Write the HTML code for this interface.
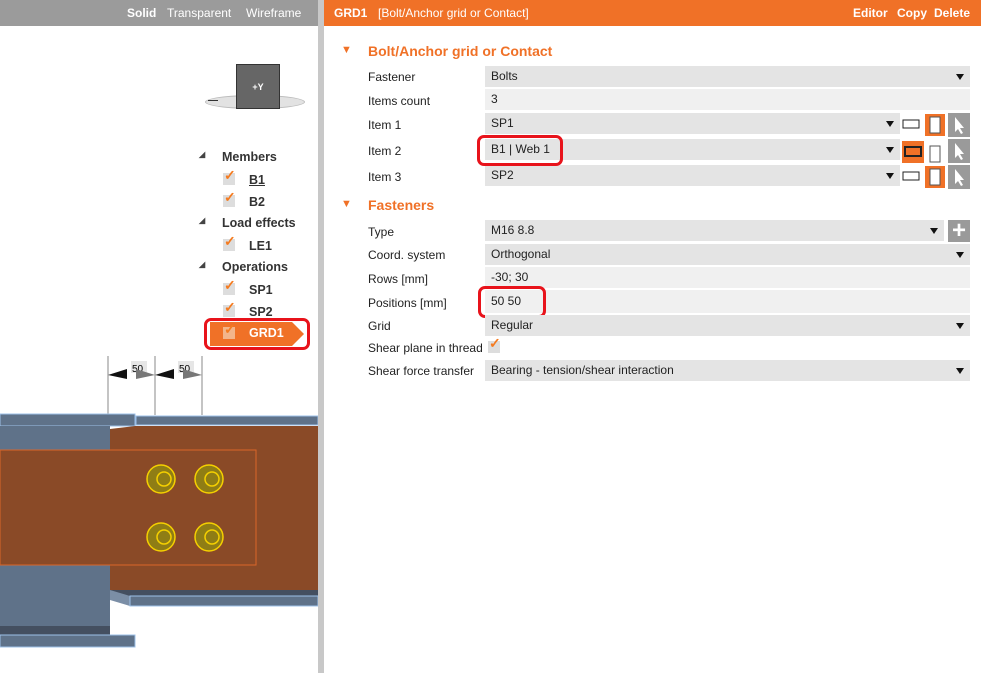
<!DOCTYPE html>
<html><head><style>
*{margin:0;padding:0;box-sizing:border-box}
body{width:981px;height:673px;overflow:hidden;background:#fff;font-family:"Liberation Sans",sans-serif;font-size:12px;color:#222;position:relative}
.a{position:absolute;white-space:nowrap}
.topL{left:0;top:0;width:318px;height:26px;background:#9b9b9b;color:#fff;font-size:12px}
.topR{left:324px;top:0;width:657px;height:26px;background:#f07127;color:#fff;font-size:12px}
.lbl{position:absolute;left:368px;font-size:12px;white-space:nowrap}
.fld{position:absolute;left:485px;background:#e4e4e4;padding-left:6px;font-size:12px;line-height:21px;height:21px}
.dd::after{content:"";position:absolute;right:6px;top:8px;border-left:4px solid transparent;border-right:4px solid transparent;border-top:6px solid #111}
.tree{font-size:12.5px;font-weight:bold;color:#333}
.chk{position:absolute;width:12px;height:12px;background:#ddd}
.chk::after{content:"✓";position:absolute;left:1px;top:-6px;color:#f47b20;font-size:14px;font-weight:bold}
.red{position:absolute;border:3px solid #e8131b;border-radius:7px}
</style></head><body>
<div class="a topL"><span class="a" style="left:127px;top:6px;font-weight:bold">Solid</span><span class="a" style="left:167px;top:6px">Transparent</span><span class="a" style="left:246px;top:6px">Wireframe</span></div>
<div class="a" style="left:318px;top:0;width:6px;height:673px;background:#c8c8c8"></div>
<div class="a topR"><span class="a" style="left:10px;top:6px;font-weight:bold">GRD1</span><span class="a" style="left:54px;top:6px">[Bolt/Anchor grid or Contact]</span>
<span class="a" style="left:529px;top:6px;font-weight:bold">Editor</span><span class="a" style="left:573px;top:6px;font-weight:bold">Copy</span><span class="a" style="left:610px;top:6px;font-weight:bold">Delete</span></div>

<!-- view cube -->
<div class="a" style="left:205px;top:95px;width:100px;height:14px;border-radius:50%;background:#e2e2e2;border:1px solid #bbb"></div>
<div class="a" style="left:236px;top:64px;width:44px;height:45px;background:#666;border:1px solid #333;color:#fff;font-size:9px;font-weight:bold;text-align:center;line-height:45px">+Y</div>
<div class="a" style="left:208px;top:100px;width:10px;height:1px;background:#333"></div>

<!-- tree -->
<div class="a tree">
<span class="a" style="left:199px;top:150px;font-size:8px;color:#444">◢</span><span class="a" style="left:222px;top:150px">Members</span>
<div class="chk" style="left:223px;top:173px"></div><span class="a" style="left:249px;top:173px;text-decoration:underline">B1</span>
<div class="chk" style="left:223px;top:195px"></div><span class="a" style="left:249px;top:195px">B2</span>
<span class="a" style="left:199px;top:216px;font-size:8px;color:#444">◢</span><span class="a" style="left:222px;top:216px">Load effects</span>
<div class="chk" style="left:223px;top:239px"></div><span class="a" style="left:249px;top:239px">LE1</span>
<span class="a" style="left:199px;top:260px;font-size:8px;color:#444">◢</span><span class="a" style="left:222px;top:260px">Operations</span>
<div class="chk" style="left:223px;top:283px"></div><span class="a" style="left:249px;top:283px">SP1</span>
<div class="chk" style="left:223px;top:305px"></div><span class="a" style="left:249px;top:305px">SP2</span>
</div>
<svg class="a" style="left:210px;top:322px" width="96" height="24"><polygon points="0,0 82,0 94,12 82,24 0,24" fill="#f07127"/></svg>
<div class="chk" style="left:223px;top:327px;background:#f3b48a"></div><span class="a tree" style="left:249px;top:326px;color:#fff">GRD1</span>
<div class="red" style="left:204px;top:318px;width:106px;height:32px"></div>

<!-- drawing -->
<svg class="a" style="left:0;top:350px" width="318" height="323">
<line x1="108" y1="6" x2="108" y2="65" stroke="#888"/><line x1="155" y1="6" x2="155" y2="65" stroke="#888"/><line x1="202" y1="6" x2="202" y2="65" stroke="#888"/>
<rect x="131" y="11" width="16" height="12" fill="#e6e6e6"/><rect x="178" y="11" width="16" height="12" fill="#e6e6e6"/>
<text x="132" y="22" font-size="10" font-family="Liberation Sans">50</text><text x="179" y="22" font-size="10" font-family="Liberation Sans">50</text>
<polygon points="108,25 127,19 127,29" fill="#111"/><polygon points="155,25 136,19 136,29" fill="#777"/>
<polygon points="155,25 174,19 174,29" fill="#111"/><polygon points="202,25 183,19 183,29" fill="#777"/>
<rect x="0" y="64" width="135" height="12" fill="#5f7289" stroke="#9cc0e8"/>
<rect x="136" y="66" width="182" height="9" fill="#5f7289" stroke="#9cc0e8"/>
<rect x="0" y="76" width="110" height="200" fill="#5f7289"/>
<polygon points="110,79 135,76 318,76 318,240 110,240" fill="#8a4a27"/>
<rect x="110" y="240" width="208" height="6" fill="#444f60"/>
<polygon points="110,240 130,246 130,256 110,250" fill="#7b8ea6"/>
<rect x="130" y="246" width="188" height="10" fill="#5f7289" stroke="#9cc0e8"/>
<rect x="0" y="100" width="256" height="115" fill="#8a4a27" stroke="#d9652a"/>
<rect x="0" y="276" width="110" height="9" fill="#444f60"/>
<rect x="0" y="285" width="135" height="12" fill="#5f7289" stroke="#9cc0e8"/>
<g fill="#8f7d15" stroke="#f5d000" stroke-width="1.5">
<circle cx="161" cy="129" r="14"/><circle cx="209" cy="129" r="14"/><circle cx="161" cy="187" r="14"/><circle cx="209" cy="187" r="14"/>
<circle cx="164" cy="129" r="7"/><circle cx="212" cy="129" r="7"/><circle cx="164" cy="187" r="7"/><circle cx="212" cy="187" r="7"/>
</g>
</svg>

<!-- right panel -->
<span class="a" style="left:341px;top:44px;color:#f07127;font-size:11px">▼</span>
<span class="a" style="left:368px;top:43px;color:#f07127;font-weight:bold;font-size:14px">Bolt/Anchor grid or Contact</span>
<span class="lbl" style="top:70px">Fastener</span><div class="fld dd" style="top:66px;width:485px">Bolts</div>
<span class="lbl" style="top:94px">Items count</span><div class="fld" style="top:89px;width:485px;background:#f0f0f0">3</div>
<span class="lbl" style="top:118px">Item 1</span><div class="fld dd" style="top:113px;width:415px">SP1</div>
<span class="lbl" style="top:144px">Item 2</span><div class="fld dd" style="top:139px;width:415px">B1 | Web 1</div>
<span class="lbl" style="top:170px">Item 3</span><div class="fld dd" style="top:165px;width:415px">SP2</div>
<div class="red" style="left:477px;top:135px;width:86px;height:31px"></div>
<!-- icons -->
<svg class="a" style="left:900px;top:112px" width="72" height="78">
<g stroke="#222" fill="#fff"><rect x="3" y="8" width="16" height="8"/><rect x="3" y="60" width="16" height="8"/></g>
<rect x="2" y="29" width="22" height="22" fill="#f07127"/><rect x="5" y="35" width="16" height="9" fill="none" stroke="#222" stroke-width="2"/>
<rect x="25" y="2" width="20" height="22" fill="#f07127"/><rect x="30" y="5" width="10" height="16" fill="#fff" stroke="#555"/>
<rect x="30" y="34" width="10" height="16" fill="none" stroke="#555"/>
<rect x="25" y="54" width="20" height="22" fill="#f07127"/><rect x="30" y="57" width="10" height="16" fill="#fff" stroke="#555"/>
<rect x="48" y="1" width="22" height="24" fill="#9a9a9a"/><rect x="48" y="27" width="22" height="24" fill="#9a9a9a"/><rect x="48" y="53" width="22" height="24" fill="#9a9a9a"/>
<g fill="#fff"><path d="M55 5 L55 20 L58 17 L61 22 L63 21 L60 16 L64 16Z"/><path d="M55 31 L55 46 L58 43 L61 48 L63 47 L60 42 L64 42Z"/><path d="M55 57 L55 72 L58 69 L61 74 L63 73 L60 68 L64 68Z"/></g>
</svg>

<span class="a" style="left:341px;top:198px;color:#f07127;font-size:11px">▼</span>
<span class="a" style="left:368px;top:197px;color:#f07127;font-weight:bold;font-size:14px">Fasteners</span>
<span class="lbl" style="top:225px">Type</span><div class="fld dd" style="top:220px;width:459px">M16 8.8</div>
<div class="a" style="left:948px;top:220px;width:22px;height:22px;background:#9a9a9a;color:#fff;font-size:24px;font-weight:bold;text-align:center;line-height:22px">+</div>
<span class="lbl" style="top:248px">Coord. system</span><div class="fld dd" style="top:244px;width:485px">Orthogonal</div>
<span class="lbl" style="top:272px">Rows [mm]</span><div class="fld" style="top:267px;width:485px;background:#f0f0f0">-30; 30</div>
<span class="lbl" style="top:296px">Positions [mm]</span><div class="fld" style="top:290px;width:485px;background:#f0f0f0;line-height:23px;height:23px">50 50</div>
<div class="red" style="left:478px;top:286px;width:68px;height:32px"></div>
<span class="lbl" style="top:319px">Grid</span><div class="fld dd" style="top:315px;width:485px">Regular</div>
<span class="lbl" style="top:341px">Shear plane in thread</span><div class="chk" style="left:488px;top:341px"></div>
<span class="lbl" style="top:364px">Shear force transfer</span><div class="fld dd" style="top:360px;width:485px">Bearing - tension/shear interaction</div>
</body></html>
